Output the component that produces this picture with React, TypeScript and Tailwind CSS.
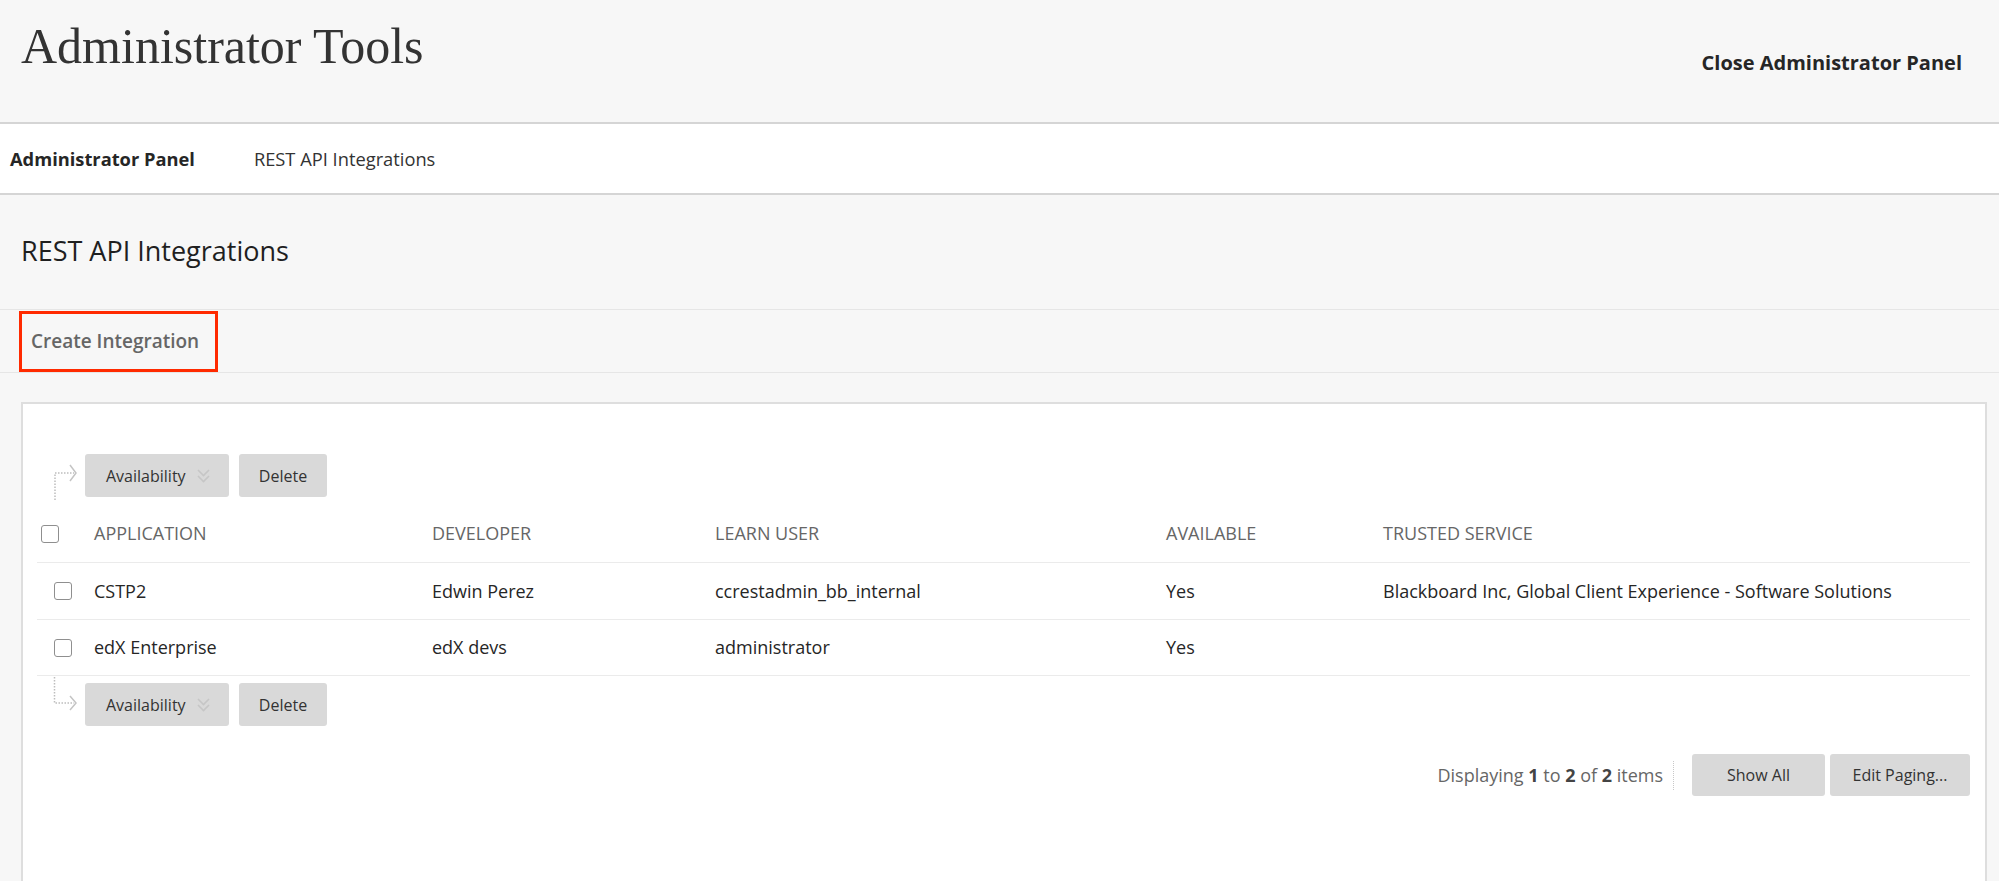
import { useState } from 'react'

const rows = [
  {
    app: 'CSTP2',
    dev: 'Edwin Perez',
    user: 'ccrestadmin_bb_internal',
    available: 'Yes',
    trusted: 'Blackboard Inc, Global Client Experience - Software Solutions',
  },
  {
    app: 'edX Enterprise',
    dev: 'edX devs',
    user: 'administrator',
    available: 'Yes',
    trusted: '',
  },
]

const cols = 'grid grid-cols-[57px_338px_283px_451px_217px_1fr] items-center'

function Checkbox({ className = '' }: { className?: string }) {
  const [checked, setChecked] = useState(false)
  return (
    <button
      onClick={() => setChecked(!checked)}
      className={`w-[18px] h-[18px] rounded-[3px] border-[1.5px] border-[#8f8f8f] bg-white ${className}`}
    />
  )
}

function ChevronsDown() {
  return (
    <svg width="13" height="16" viewBox="0 0 13 16" fill="none">
      <polyline points="1,2 6.5,7.5 12,2" stroke="#c6c6c6" strokeWidth="1.6" />
      <polyline points="1,8 6.5,13.5 12,8" stroke="#c6c6c6" strokeWidth="1.6" />
    </svg>
  )
}

function ActionButtons({ top }: { top: boolean }) {
  return (
    <div className="flex items-start">
      <svg
        width="26"
        height="43"
        viewBox="0 0 26 43"
        fill="none"
        className="ml-[17px] overflow-visible"
      >
        {top ? (
          <>
            <path d="M1 46 V19 H20" stroke="#bdbdbd" strokeWidth="1.5" strokeDasharray="1.5 1.5" />
            <polyline points="16,11 22,19 16,27" stroke="#c4c4c4" strokeWidth="1.5" />
          </>
        ) : (
          <>
            <path d="M0.5 -6 V20 H20" stroke="#bdbdbd" strokeWidth="1.5" strokeDasharray="1.5 1.5" />
            <polyline points="16,13 22,20 16,27" stroke="#c4c4c4" strokeWidth="1.5" />
          </>
        )}
      </svg>
      <button className="ml-[5px] h-[43px] w-[144px] flex items-center pl-[21px] gap-[11px] bg-[#d9d9d9] rounded-[3px] text-[16px] text-[#333]">
        Availability
        <ChevronsDown />
      </button>
      <button className="ml-[10px] h-[43px] w-[88px] bg-[#d9d9d9] rounded-[3px] text-[16px] text-[#333]">
        Delete
      </button>
    </div>
  )
}

export default function App() {
  return (
    <div className="min-h-screen bg-[#f7f7f7] font-['Open_Sans',sans-serif] text-[#262626] overflow-hidden">
      <header className="h-[124px] border-b-2 border-[#d5d5d5] flex justify-between">
        <h1 className="pl-[21px] pt-[21px] font-['Liberation_Serif',serif] text-[50px] leading-none font-normal text-[#333]">
          Administrator Tools
        </h1>
        <a className="pr-[37px] pt-[53px] text-[20px] leading-none font-bold text-[#262626]">
          Close Administrator Panel
        </a>
      </header>

      <nav className="h-[71px] bg-white border-b-2 border-[#d5d5d5] flex items-center pl-[10px] gap-[59px] text-[18.3px]">
        <span className="font-bold text-[#262626]">Administrator Panel</span>
        <span className="text-[#333]">REST API Integrations</span>
      </nav>

      <h2 className="pl-[21px] pt-[42px] text-[27px] leading-none text-[#1f1f1f]">
        REST API Integrations
      </h2>

      <div className="mt-[45px] h-[64px] border-y border-[#e6e6e6] flex items-center">
        <div className="ml-[19px] h-[61px] w-[199px] border-[3px] border-[#ff2a00] flex items-center pl-[9px]">
          <span className="text-[19px] font-semibold text-[#666]">Create Integration</span>
        </div>
      </div>

      <section className="mt-[29px] ml-[21px] mr-[12px] h-[520px] border-2 border-[#dedede] bg-white pt-[50px] pl-[14px] pr-[15px]">
        <ActionButtons top />

        <div className={`${cols} mt-[8px] h-[58px] border-b border-[#ebebeb] text-[18px] text-[#666] uppercase`}>
          <div className="pl-[4px] flex">
            <Checkbox />
          </div>
          <div>Application</div>
          <div>Developer</div>
          <div>Learn User</div>
          <div>Available</div>
          <div>Trusted Service</div>
        </div>

        {rows.map((r, i) => (
          <div
            key={i}
            className={`${cols} ${i === 0 ? 'h-[57px]' : 'h-[56px]'} border-b border-[#ebebeb] text-[18px] text-[#262626]`}
          >
            <div className="pl-[17px] flex">
              <Checkbox />
            </div>
            <div>{r.app}</div>
            <div>{r.dev}</div>
            <div>{r.user}</div>
            <div>{r.available}</div>
            <div>{r.trusted}</div>
          </div>
        ))}

        <div className="mt-[7px]">
          <ActionButtons top={false} />
        </div>

        <div className="mt-[28px] flex justify-end items-center">
          <span className="text-[18px] text-[#666]">
            Displaying <b className="text-[#444]">1</b> to <b className="text-[#444]">2</b> of{' '}
            <b className="text-[#444]">2</b> items
          </span>
          <span className="ml-[10px] h-[29px] border-l border-dotted border-[#c8c8c8]" />
          <button className="ml-[18px] h-[42px] w-[133px] bg-[#d9d9d9] rounded-[3px] text-[16px] text-[#333]">
            Show All
          </button>
          <button className="ml-[5px] h-[42px] w-[140px] bg-[#d9d9d9] rounded-[3px] text-[16px] text-[#333]">
            Edit Paging...
          </button>
        </div>
      </section>
    </div>
  )
}
